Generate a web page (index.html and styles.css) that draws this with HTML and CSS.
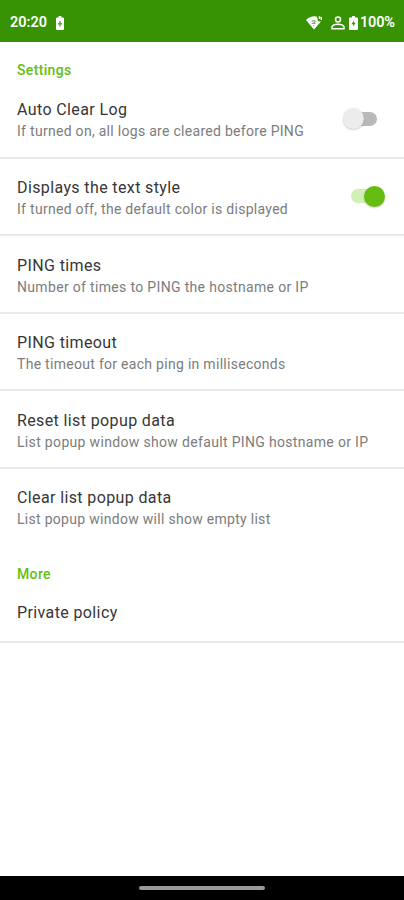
FILE: index.html
```
<!DOCTYPE html>
<html lang="en">
<head>
<meta charset="utf-8">
<title>Settings</title>
<link rel="stylesheet" href="styles.css">
</head>
<body>
<header class="status">
  <span class="clock">20:20</span>
  <svg class="battery-left" width="8" height="14" viewBox="0 0 8 14"><path fill="#fff" d="M2.5 0h3v1.500H7q1 0 1 1V13q0 1-1 1H1q-1 0-1-1V2.500q0-1 1-1h1.500z"/><path fill="#60a548" d="M3.300 5h1.500v2H6v1.500H4.800v2H3.300v-2H2V7h1.300z"/></svg>
  <svg class="wifi" width="16" height="14" viewBox="0 0 16 14"><path fill="#fff" d="M0 4Q5-.8 11 .7l1 4.500 3 .3L8 13.500z"/><path stroke="#fff" stroke-width="1.500" d="M13.500.3v2.800M15.300 1v3"/><path fill="none" stroke="#78b060" stroke-width="1.200" d="M5.800 5.200q1.700-1.300 3.400 0L7.500 7.300M5.800 7.500h3.700M7.600 9v1"/></svg>
  <svg class="person" width="14" height="14" viewBox="0 0 14 14" fill="none" stroke="#fff" stroke-width="1.500"><circle cx="7" cy="3.400" r="2.500"/><path d="M1 12.800v-2Q2 8.300 7 8.300t6 2.500v2z"/></svg>
  <svg class="battery" width="9" height="14" viewBox="0 0 9 14"><path fill="#fff" d="M3 0h3v1.500h2q1 0 1 1V13q0 1-1 1H1q-1 0-1-1V2.500q0-1 1-1h2z"/><path fill="#379204" d="M5 4.500 2.500 8.300h1.700v2.200l2.500-3.700H5z"/></svg>
  <span class="percent">100%</span>
</header>
<main>
  <h2 class="section">Settings</h2>
  <div class="row"><div><div class="title">Auto Clear Log</div><div class="sub">If turned on, all logs are cleared before PING</div></div><span class="switch off"><i></i></span></div>
  <div class="row"><div><div class="title">Displays the text style</div><div class="sub">If turned off, the default color is displayed</div></div><span class="switch on"><i></i></span></div>
  <div class="row"><div><div class="title">PING times</div><div class="sub wide">Number of times to PING the hostname or IP</div></div></div>
  <div class="row"><div><div class="title">PING timeout</div><div class="sub">The timeout for each ping in milliseconds</div></div></div>
  <div class="row"><div><div class="title">Reset list popup data</div><div class="sub wide">List popup window show default PING hostname or IP</div></div></div>
  <div class="row last"><div><div class="title">Clear list popup data</div><div class="sub">List popup window will show empty list</div></div></div>
  <h2 class="section more">More</h2>
  <div class="row policy"><div class="title">Private policy</div></div>
</main>
<footer class="nav"><span class="handle"></span></footer>
</body>
</html>
```
FILE: styles.css
```
* { box-sizing: border-box; }
body { margin: 0; height: 900px; display: flex; flex-direction: column; overflow: hidden; background: #fff; font-family: Roboto, sans-serif; }
.status { height: 42px; flex: none; background: #379204; color: #fff; display: flex; align-items: center; padding: 3px 9px 0 10px; font-size: 14.5px; font-weight: 600; }
.clock { width: 46px; }
.wifi { margin-left: auto; margin-right: 9px; }
.person { margin-right: 4px; }
.battery { margin-right: 2px; }
.percent { width: 35px; letter-spacing: -.2px; }
main { flex: 1; }
.section { margin: 0; height: 39px; padding: 19px 17px 0; font-size: 14px; line-height: 19px; font-weight: 500; color: #66bd12; letter-spacing: .35px; }
.row { height: 77.6px; padding: 18.4px 17px 0; border-bottom: 2px solid #ebebeb; display: flex; justify-content: space-between; }
.row.last { border-bottom-color: transparent; }
.title { height: 21px; line-height: 21px; font-size: 16px; letter-spacing: .38px; color: #363636; white-space: nowrap; }
.sub { height: 21px; line-height: 22px; font-size: 14px; letter-spacing: .29px; color: #7c7c7c; white-space: nowrap; }
.wide { letter-spacing: .33px; }
.switch { display: block; flex: none; width: 34px; height: 22px; margin-top: 9px; position: relative; }
.switch::before { content: ""; position: absolute; top: 3.500px; width: 27px; height: 14px; border-radius: 7px; }
.switch i { position: absolute; top: 0; width: 21px; height: 21px; border-radius: 50%; box-shadow: 0 1px 2px #0003; }
.off { margin-right: 10px; }
.off::before { right: 0; background: #b9b9b9; }
.off i { left: 0; background: #ececec; }
.on { margin-right: 2px; }
.on::before { left: 0; background: #d1efb6; }
.on i { right: 0; background: #66bd12; }
.more { height: 37px; padding-top: 18px; }
.policy { height: 59px; }
.nav { height: 24px; flex: none; background: #000; display: flex; justify-content: center; padding-top: 9.500px; }
.handle { width: 126px; height: 4px; border-radius: 2px; background: #999; }
```
